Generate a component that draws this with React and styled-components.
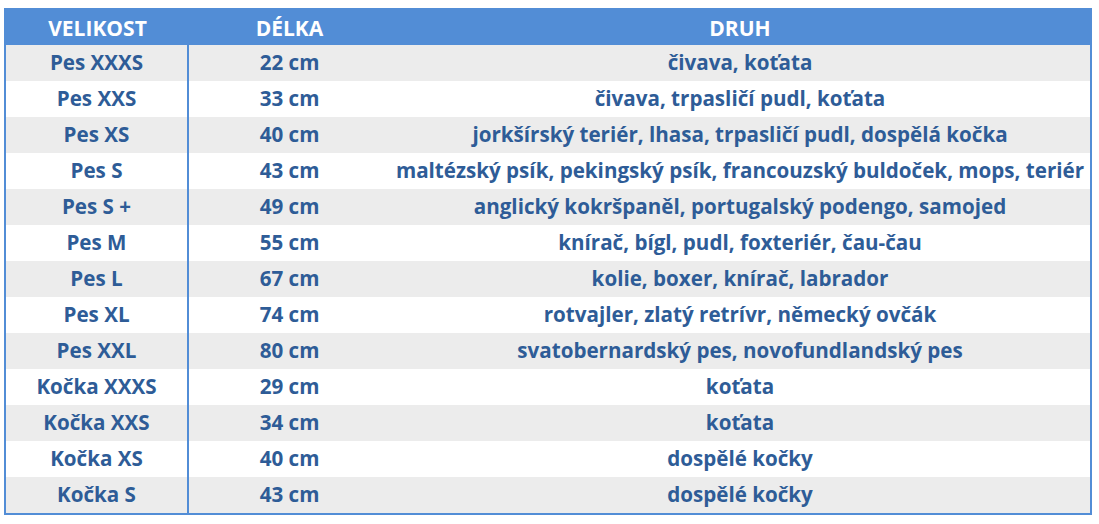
import React from 'react';
import styled, { createGlobalStyle } from 'styled-components';

const GlobalStyle = createGlobalStyle`
  body {
    margin: 0;
    background: #ffffff;
    font-family: "Open Sans", "Liberation Sans", sans-serif;
  }
`;

const Page = styled.div`
  padding: 8px 7px 0 4px;
`;

const Table = styled.div`
  border: 2px solid #528dd6;
  width: 1088px;
  box-sizing: border-box;
`;

const Row = styled.div`
  display: grid;
  grid-template-columns: 183px 201px 1fr;
  height: ${(p) => (p.$head ? '35px' : '36px')};
  background: ${(p) => (p.$head ? '#528dd6' : p.$shaded ? '#ececec' : '#ffffff')};
`;

const Cell = styled.div`
  display: flex;
  align-items: center;
  justify-content: center;
  box-sizing: border-box;
  padding-bottom: ${(p) => (p.$head ? '0' : '2px')};
  font-size: ${(p) => (p.$head ? '21px' : '20.6px')};
  font-weight: 700;
  white-space: nowrap;
  color: ${(p) => (p.$head ? '#ffffff' : '#2e5c97')};
  border-right: ${(p) => (p.$divider ? '2px solid #528dd6' : 'none')};
`;

const rows = [
  ['Pes XXXS', '22 cm', 'čivava, koťata'],
  ['Pes XXS', '33 cm', 'čivava, trpasličí pudl, koťata'],
  ['Pes XS', '40 cm', 'jorkšírský teriér, lhasa, trpasličí pudl, dospělá kočka'],
  ['Pes S', '43 cm', 'maltézský psík, pekingský psík, francouzský buldoček, mops, teriér'],
  ['Pes S +', '49 cm', 'anglický kokršpaněl, portugalský podengo, samojed'],
  ['Pes M', '55 cm', 'knírač, bígl, pudl, foxteriér, čau-čau'],
  ['Pes L', '67 cm', 'kolie, boxer, knírač, labrador'],
  ['Pes XL', '74 cm', 'rotvajler, zlatý retrívr, německý ovčák'],
  ['Pes XXL', '80 cm', 'svatobernardský pes, novofundlandský pes'],
  ['Kočka XXXS', '29 cm', 'koťata'],
  ['Kočka XXS', '34 cm', 'koťata'],
  ['Kočka XS', '40 cm', 'dospělé kočky'],
  ['Kočka S', '43 cm', 'dospělé kočky'],
];

export default function App() {
  return (
    <>
      <GlobalStyle />
      <Page>
        <Table>
          <Row $head>
            <Cell $head>VELIKOST</Cell>
            <Cell $head>DÉLKA</Cell>
            <Cell $head>DRUH</Cell>
          </Row>
          {rows.map(([size, length, breed], i) => (
            <Row key={size} $shaded={i % 2 === 0}>
              <Cell $divider>{size}</Cell>
              <Cell>{length}</Cell>
              <Cell>{breed}</Cell>
            </Row>
          ))}
        </Table>
      </Page>
    </>
  );
}
